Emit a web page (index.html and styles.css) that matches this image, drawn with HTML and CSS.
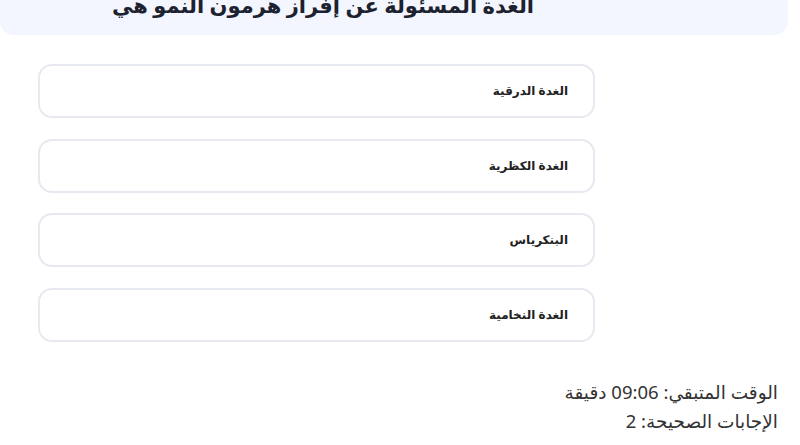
FILE: index.html
```html
<!DOCTYPE html>
<html lang="ar" dir="rtl">
<head>
<meta charset="utf-8">
<link rel="stylesheet" href="styles.css">
</head>
<body>
<div class="page">
  <header class="question">
    <h1 class="question-title">الغدة المسئولة عن إفراز هرمون النمو هي</h1>
  </header>
  <ul class="options">
    <li class="option">الغدة الدرقية</li>
    <li class="option">الغدة الكظرية</li>
    <li class="option">البنكرياس</li>
    <li class="option">الغدة النخامية</li>
  </ul>
  <div class="stats">
    <p class="stat">الوقت المتبقي: 09:06 دقيقة</p>
    <p class="stat">الإجابات الصحيحة: 2</p>
  </div>
</div>
</body>
</html>
```

FILE: styles.css
```css
html, body {
  margin: 0;
  padding: 0;
  background: #ffffff;
}
body {
  direction: rtl;
  font-family: "Noto Sans", "DejaVu Sans", sans-serif;
  color: #222;
}
.page {
  width: 800px;
  height: 465px;
  overflow: hidden;
  margin-top: -20px;
}
.question {
  width: 788px;
  margin-right: 12px;
  height: 55px;
  box-sizing: border-box;
  background: #f3f6fe;
  border-radius: 0 0 14px 14px;
  padding-right: 142px;
  display: flex;
  align-items: flex-start;
  justify-content: center;
}
.question-title {
  margin: 0;
  padding-top: 11px;
  font-size: 21px;
  line-height: 28px;
  font-weight: 700;
  color: #1c2230;
}
.options {
  list-style: none;
  margin: 29px 205px 0 0;
  padding: 0;
  width: 557px;
  display: flex;
  flex-direction: column;
  gap: 20.5px;
}
.option {
  height: 54px;
  box-sizing: border-box;
  border: 2px solid #e6e9ef;
  border-radius: 14px;
  padding: 0 25px;
  display: flex;
  align-items: center;
  font-family: "Liberation Sans", "DejaVu Sans", sans-serif;
  font-size: 12px;
  font-weight: 700;
  color: #222;
}
.stats {
  margin-top: 35px;
  padding-right: 22px;
}
.stat {
  margin: 0;
  font-size: 18.5px;
  line-height: 29px;
  color: #333;
}
```
